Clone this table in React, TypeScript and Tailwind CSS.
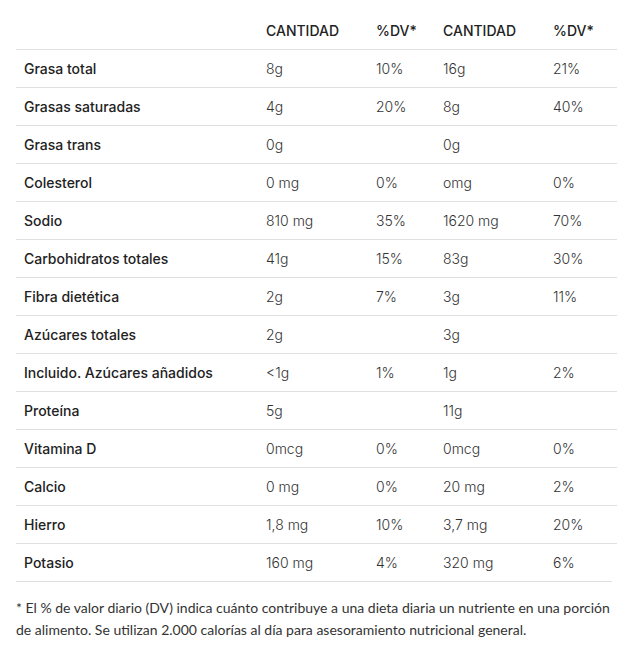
import React from "react";

const rows: [string, string, string, string, string][] = [
  ["Grasa total", "8g", "10%", "16g", "21%"],
  ["Grasas saturadas", "4g", "20%", "8g", "40%"],
  ["Grasa trans", "0g", "", "0g", ""],
  ["Colesterol", "0 mg", "0%", "omg", "0%"],
  ["Sodio", "810 mg", "35%", "1620 mg", "70%"],
  ["Carbohidratos totales", "41g", "15%", "83g", "30%"],
  ["Fibra dietética", "2g", "7%", "3g", "11%"],
  ["Azúcares totales", "2g", "", "3g", ""],
  ["Incluido. Azúcares añadidos", "<1g", "1%", "1g", "2%"],
  ["Proteína", "5g", "", "11g", ""],
  ["Vitamina D", "0mcg", "0%", "0mcg", "0%"],
  ["Calcio", "0 mg", "0%", "20 mg", "2%"],
  ["Hierro", "1,8 mg", "10%", "3,7 mg", "20%"],
  ["Potasio", "160 mg", "4%", "320 mg", "6%"],
];

const cols = "grid grid-cols-[242px_110px_67px_110px_67px]";

export default function App() {
  return (
    <div className="w-[633px] h-[658px] bg-white px-4 pt-[11px] text-[#222]" style={{ fontFamily: "Inter, 'Open Sans', sans-serif" }}>
      <div className={`${cols} h-[38px] items-center text-[14px] font-medium text-[#222]`}>
        <div />
        <div className="px-2">CANTIDAD</div>
        <div className="px-2">%DV*</div>
        <div className="px-2">CANTIDAD</div>
        <div className="px-2">%DV*</div>
      </div>
      {rows.map((r) => (
        <div key={r[0]} className={`${cols} h-[38px] items-center border-t border-[#e0e0e0] text-[14px]`}>
          <div className="px-2 font-medium text-[#222]">{r[0]}</div>
          <div className="px-2 font-light text-[#333]">{r[1]}</div>
          <div className="px-2 font-light text-[#333]">{r[2]}</div>
          <div className="px-2 font-light text-[#333]">{r[3]}</div>
          <div className="px-2 font-light text-[#333]">{r[4]}</div>
        </div>
      ))}
      <div className="border-t border-[#e0e0e0] w-[596px]" />
      <p className="mt-[15px] whitespace-nowrap text-[14px] leading-[22px] text-[#333]" style={{ fontFamily: "Lato, sans-serif" }}>
        * El % de valor diario (DV) indica cuánto contribuye a una dieta diaria un nutriente en una porción
        <br />
        de alimento. Se utilizan 2.000 calorías al día para asesoramiento nutricional general.
      </p>
    </div>
  );
}
